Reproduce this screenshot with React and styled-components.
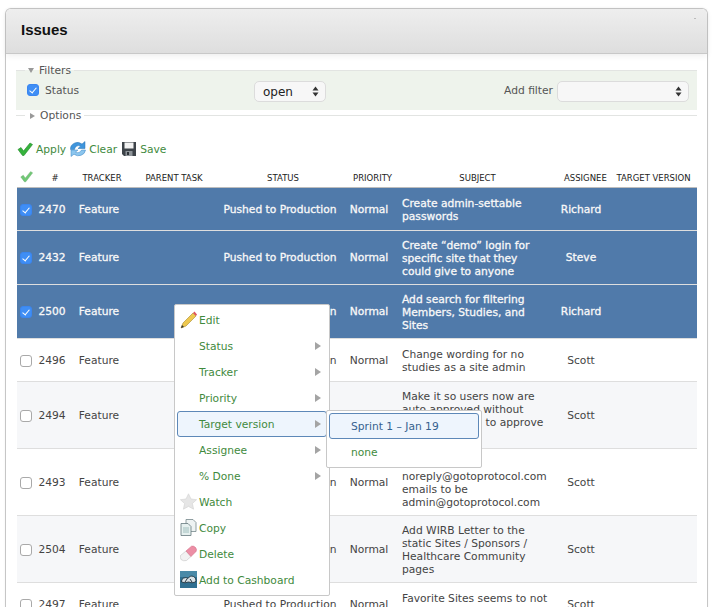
import React from "react";
import styled, { createGlobalStyle } from "styled-components";

const FONT = `"DejaVu Sans", "Liberation Sans", sans-serif`;
const GREEN = "#3f8a3d";

const Global = createGlobalStyle`
  html, body { margin: 0; padding: 0; background: #fff; height: 607px; overflow: hidden; }
  body { font-family: ${FONT}; font-size: 10.7px; color: #444; }
`;

const Page = styled.div`
  position: relative;
  width: 714px;
  height: 607px;
  overflow: hidden;
  padding: 8px 6px 0 5px;
  box-sizing: border-box;
`;
const Panel = styled.div`
  border: 1px solid #c6c6c6;
  border-bottom: 0;
  border-radius: 6px 6px 0 0;
  background: #fff;
  box-shadow: 0 0 3px rgba(0, 0, 0, 0.05);
`;
const Header = styled.div`
  position: relative;
  height: 44px;
  box-sizing: content-box;
  display: flex;
  align-items: center;
  padding-left: 15px;
  border-radius: 5px 5px 0 0;
  border-bottom: 1px solid #c8c8c8;
  background: linear-gradient(#eeeeee, #dedede);
  box-shadow: 0 2px 6px rgba(0, 0, 0, 0.07);
  &::after {
    content: "";
    position: absolute;
    right: 11px;
    top: 9px;
    width: 2px;
    height: 1px;
    background: #bbb;
  }
`;
const Title = styled.h1`
  margin: 0 0 3px;
  font: bold 15px "Liberation Sans", sans-serif;
  color: #111;
`;
const Body = styled.div`
  padding: 11px 10px 0;
`;
const Fieldset = styled.fieldset`
  margin: 0;
  padding: 0;
  min-width: 0;
  border: 0;
  border-top: 1px solid #e2e4e2;
  background: ${(p) => p.$bg || "transparent"};
  height: ${(p) => p.$h};
`;
const Legend = styled.legend`
  margin-left: 9px;
  padding: 0 3px 0 3px;
  display: flex;
  align-items: center;
  gap: 5px;
  font-size: 10.7px;
  line-height: 11px;
  color: #555;
`;
const FilterRow = styled.div`
  display: grid;
  grid-template-columns: 227px 72px 1fr 132px;
  align-items: center;
  padding: 5px 8px 0 11px;
`;
const StatusLabel = styled.label`
  display: flex;
  align-items: center;
  gap: 6px;
  color: #555;
  margin-top: -3px;
`;
const AddLabel = styled.span`
  justify-self: end;
  padding-right: 4px;
  color: #555;
  margin-top: -3px;
`;
const Check = styled.input.attrs({ type: "checkbox" })`
  appearance: none;
  margin: 0;
  width: 12px;
  height: 12px;
  flex: none;
  position: relative;
  box-sizing: border-box;
  vertical-align: middle;
  border-radius: 3px;
  border: 1px solid ${(p) => (p.checked ? "#3a86f0" : "#a9a9a9")};
  background: ${(p) => (p.checked ? "#3f8ef5" : "#fff")};
  &:checked::after {
    content: "";
    position: absolute;
    left: 3px;
    top: 1px;
    width: 3px;
    height: 6px;
    border: solid #fff;
    border-width: 0 1.5px 1.5px 0;
    transform: rotate(40deg);
  }
`;
const SelectWrap = styled.div`
  position: relative;
  height: 21px;
`;
const Select = styled.select`
  appearance: none;
  width: 100%;
  height: 21px;
  box-sizing: border-box;
  padding: 0 0 0 8px;
  border: 1px solid #dcdcdc;
  border-radius: 5px;
  background: #f7f7f7;
  font: 12px ${FONT};
  color: #222;
`;
const SelectArrows = styled.svg`
  position: absolute;
  right: 7px;
  top: 5px;
  pointer-events: none;
`;
const Actions = styled.div`
  display: flex;
  align-items: center;
  height: 16px;
  margin: 20px 0 0 1px;
`;
const ActionLink = styled.a`
  display: flex;
  align-items: center;
  gap: 3px;
  margin-right: 4px;
  color: ${GREEN};
  font-size: 10.7px;
  text-decoration: none;
`;
const Table = styled.table`
  width: 680px;
  table-layout: fixed;
  border-collapse: collapse;
  margin: 11px 0 0 1px;
`;
const Th = styled.th`
  height: 19px;
  padding: 0 0 0 ${(p) => (p.$first ? 0 : 6)}px;
  font-size: 8.5px;
  font-weight: normal;
  color: #222;
  text-transform: uppercase;
  text-align: center;
  white-space: nowrap;
  border-bottom: 1px solid #bdbdbd;
`;
const Tr = styled.tr`
  background: ${(p) => (p.$sel ? "#507aaa" : p.$alt ? "#f6f7f9" : "#fff")};
  color: ${(p) => (p.$sel ? "#f8f8f8" : "#444")};
  ${(p) => p.$sel && "-webkit-text-stroke: 0.3px #f8f8f8;"}
`;
const Td = styled.td`
  height: 43px;
  box-sizing: border-box;
  padding: 7px 0 7px ${(p) => p.$pl || 0}px;
  line-height: 13px;
  white-space: nowrap;
  text-align: ${(p) => p.$align || "center"};
  border-bottom: 1px solid #dedede;
`;
const SubjectCell = styled(Td)`
  padding-top: 8px;
  padding-bottom: 6px;
  text-align: left;
  padding-left: 11px;
`;
const SubjectLine = styled.div`
  line-height: 13px;
`;
const Menu = styled.ul`
  position: absolute;
  left: ${(p) => p.$left}px;
  top: ${(p) => p.$top}px;
  width: 156px;
  box-sizing: border-box;
  margin: 0;
  padding: 2px;
  list-style: none;
  background: #fff;
  border: 1px solid #c8c8c8;
  border-radius: 2px;
  z-index: ${(p) => p.$z || 1};
`;
const Item = styled.li`
  position: relative;
  display: flex;
  align-items: center;
  height: 26px;
  box-sizing: border-box;
  padding-left: 21px;
  color: ${(p) => (p.$dark ? "#35618f" : GREEN)};
  background: ${(p) => (p.$hover ? "#eef5fd" : "transparent")};
  border: 1px solid ${(p) => (p.$hover ? "#5d88b8" : "transparent")};
  border-radius: 3px;
`;
const ItemIcon = styled.svg`
  position: absolute;
  left: 2px;
  top: 3px;
`;
const SubArrow = styled.span`
  position: absolute;
  right: 5px;
  top: 8px;
  width: 0;
  height: 0;
  border-left: 6px solid #a4a4a4;
  border-top: 4px solid transparent;
  border-bottom: 4px solid transparent;
`;
const Disclosure = styled.span`
  width: 0;
  height: 0;
  ${(p) =>
    p.$open
      ? "border-top: 5px solid #999; border-left: 3.5px solid transparent; border-right: 3.5px solid transparent;"
      : "border-left: 5px solid #999; border-top: 3.5px solid transparent; border-bottom: 3.5px solid transparent; margin-left: 2px;"}
`;

const Arrows = () => (
  <SelectArrows width="7" height="11" viewBox="0 0 7 11">
    <path d="M3.5 0.5 L6.5 4.5 H0.5 Z M3.5 10.5 L6.5 6.5 H0.5 Z" fill="#333" />
  </SelectArrows>
);
const CheckIcon = ({ size = 16, faded }) => (
  <svg width={size} height={size} viewBox="0 0 16 16" style={faded ? { opacity: 0.7 } : undefined}>
    <path d="M1 8.5 L4 6.5 L6.5 10 L13 2 L15.5 3.5 L7 14.5 H5.5 Z" fill="#35b33c" stroke="#23862b" strokeWidth="0.6" />
  </svg>
);
const RefreshIcon = () => (
  <svg width="16" height="16" viewBox="0 0 16 16">
    <path d="M0.5 8.5 A7 6.5 0 0 1 12 3 L15 0.5 V7.5 H8 L10.5 5.2 A4 4 0 0 0 4.5 8.5 Z" fill="#3f95dc" stroke="#2b73b5" strokeWidth="0.5" />
    <path d="M15.5 9 A7 6.5 0 0 1 4 13.2 L1 15.5 V9 H8 L5.6 11 A4 4 0 0 0 11.5 9 Z" fill="#8cc6ee" stroke="#3b85c5" strokeWidth="0.5" />
  </svg>
);
const FloppyIcon = () => (
  <svg width="16" height="16" viewBox="0 0 16 16">
    <path d="M1 1 H15 V15 H3 L1 13 Z" fill="#3d4349" />
    <rect x="3.5" y="1.5" width="9" height="6" fill="#f2f2f2" />
    <rect x="4.5" y="10" width="7" height="5" fill="#8e9499" />
    <rect x="6" y="11" width="2" height="3" fill="#2e3338" />
  </svg>
);
const PencilIcon = () => (
  <ItemIcon width="17" height="18" viewBox="0 0 17 18">
    <path d="M1 17 L3 12 L13 2 L16 5 L6 15 Z" fill="#eec84f" stroke="#a98a2c" strokeWidth="0.6" />
    <path d="M13 2 L14.5 0.6 L17 3.5 L16 5 Z" fill="#e0555e" />
    <path d="M1 17 L2 14 L4 16 Z" fill="#333" />
  </ItemIcon>
);
const StarIcon = () => (
  <ItemIcon width="17" height="17" viewBox="0 0 17 17">
    <path d="M8.5 0.8 L11 6 L16.6 6.7 L12.4 10.5 L13.6 16.2 L8.5 13.4 L3.4 16.2 L4.6 10.5 L0.4 6.7 L6 6 Z" fill="#e6e6e6" stroke="#d2d2d2" strokeWidth="0.6" />
  </ItemIcon>
);
const CopyIcon = () => (
  <ItemIcon width="17" height="17" viewBox="0 0 17 17">
    <path d="M6 0.5 H13 L16 3.5 V12.5 H6 Z" fill="#eef3f3" stroke="#76888c" strokeWidth="0.8" />
    <path d="M1 4.5 H8 L11 7.5 V16.5 H1 Z" fill="#e6f0ef" stroke="#66797d" strokeWidth="0.8" />
    <path d="M3 9 H9 M3 11 H9 M3 13 H9" stroke="#8fb3b3" strokeWidth="0.8" />
  </ItemIcon>
);
const EraserIcon = () => (
  <ItemIcon width="17" height="17" viewBox="0 0 17 17">
    <path d="M0.5 10.5 L6 6 L11 11.5 L6.5 15.5 Q3.5 16.5 1 14.5 Q0 12.5 0.5 10.5 Z" fill="#f2f2f2" stroke="#c4c4c4" strokeWidth="0.6" />
    <path d="M6 6 L11.5 1.2 Q13.5 0.6 15.5 2.5 Q17.2 4.5 16 6.5 L11 11.5 Z" fill="#ec8ea5" stroke="#d57189" strokeWidth="0.6" />
  </ItemIcon>
);
const GaugeIcon = () => (
  <ItemIcon width="17" height="17" viewBox="0 0 17 17">
    <rect width="17" height="17" fill="#2f6f90" />
    <rect width="17" height="6" fill="#4a8aa8" />
    <path d="M1.5 11 A4 4 0 0 1 8 7.5 A4 4 0 0 1 15.5 11 Q12 12.5 8.5 11 Q5 12.5 1.5 11 Z" fill="#d9e3e8" stroke="#12232d" strokeWidth="0.8" />
    <path d="M5 11 L7 8 M12 11 L10 8" stroke="#12232d" strokeWidth="0.9" />
  </ItemIcon>
);

const COLS = [18, 34, 60, 84, 134, 44, 167, 46, 93];
const HEADS = ["", "#", "Tracker", "Parent task", "Status", "Priority", "Subject", "Assignee", "Target version"];
const PTP = "Pushed to Production";
const ROWS = [
  { id: 2470, sel: 1, status: PTP, who: "Richard", subj: ["Create admin-settable", "passwords"] },
  { id: 2432, sel: 1, status: PTP, who: "Steve", subj: ["Create “demo” login for", "specific site that they", "could give to anyone"] },
  { id: 2500, sel: 1, status: PTP, who: "Richard", subj: ["Add search for filtering", "Members, Studies, and", "Sites"] },
  { id: 2496, status: PTP, who: "Scott", subj: ["Change wording for no", "studies as a site admin"] },
  { id: 2494, alt: 1, status: PTP, who: "Scott", subj: ["Make it so users now are", "auto approved without", "needing admin to approve", "them"] },
  { id: 2493, status: PTP, who: "Scott", subj: ["Send from", "noreply@gotoprotocol.com", "emails to be", "admin@gotoprotocol.com"] },
  { id: 2504, alt: 1, status: PTP, who: "Scott", subj: ["Add WIRB Letter to the", "static Sites / Sponsors /", "Healthcare Community", "pages"] },
  { id: 2497, status: PTP, who: "Scott", subj: ["Favorite Sites seems to not", "be sorted right"] },
];
const MENU = [
  { label: "Edit", icon: <PencilIcon /> },
  { label: "Status", sub: 1 },
  { label: "Tracker", sub: 1 },
  { label: "Priority", sub: 1 },
  { label: "Target version", sub: 1, hover: 1 },
  { label: "Assignee", sub: 1 },
  { label: "% Done", sub: 1 },
  { label: "Watch", icon: <StarIcon /> },
  { label: "Copy", icon: <CopyIcon /> },
  { label: "Delete", icon: <EraserIcon /> },
  { label: "Add to Cashboard", icon: <GaugeIcon /> },
];

export default function App() {
  return (
    <Page>
      <Global />
      <Panel>
        <Header>
          <Title>Issues</Title>
        </Header>
        <Body>
          <Fieldset $bg="#eef3ec" $h="44px">
            <Legend>
              <Disclosure $open />
              Filters
            </Legend>
            <FilterRow>
              <StatusLabel>
                <Check checked readOnly />
                Status
              </StatusLabel>
              <SelectWrap>
                <Select defaultValue="open">
                  <option>open</option>
                </Select>
                <Arrows />
              </SelectWrap>
              <AddLabel>Add filter</AddLabel>
              <SelectWrap>
                <Select />
                <Arrows />
              </SelectWrap>
            </FilterRow>
          </Fieldset>
          <Fieldset $h="6px">
            <Legend>
              <Disclosure />
              Options
            </Legend>
          </Fieldset>
          <Actions>
            <ActionLink>
              <CheckIcon />
              Apply
            </ActionLink>
            <ActionLink>
              <RefreshIcon />
              Clear
            </ActionLink>
            <ActionLink>
              <FloppyIcon />
              Save
            </ActionLink>
          </Actions>
          <Table>
            <colgroup>
              {COLS.map((w, i) => (
                <col key={i} width={w} />
              ))}
            </colgroup>
            <thead>
              <tr>
                {HEADS.map((h, i) => (
                  <Th key={i} $first={i === 0}>{i === 0 ? <CheckIcon size={13} faded /> : h}</Th>
                ))}
              </tr>
            </thead>
            <tbody>
              {ROWS.map((r) => (
                <Tr key={r.id} $sel={r.sel} $alt={r.alt}>
                  <Td $pl={3} $align="left">
                    <Check checked={!!r.sel} readOnly />
                  </Td>
                  <Td>{r.id}</Td>
                  <Td>Feature</Td>
                  <Td />
                  <Td>{r.status}</Td>
                  <Td>Normal</Td>
                  <SubjectCell>
                    {r.subj.map((s) => (
                      <SubjectLine key={s}>{s}</SubjectLine>
                    ))}
                  </SubjectCell>
                  <Td>{r.who}</Td>
                  <Td />
                </Tr>
              ))}
            </tbody>
          </Table>
        </Body>
      </Panel>
      <Menu $left={174} $top={304}>
        {MENU.map((m) => (
          <Item key={m.label} $hover={m.hover}>
            {m.icon}
            {m.label}
            {m.sub && <SubArrow />}
          </Item>
        ))}
      </Menu>
      <Menu $left={326} $top={410} $z={2}>
        <Item $hover $dark>Sprint 1 – Jan 19</Item>
        <Item>none</Item>
      </Menu>
    </Page>
  );
}
